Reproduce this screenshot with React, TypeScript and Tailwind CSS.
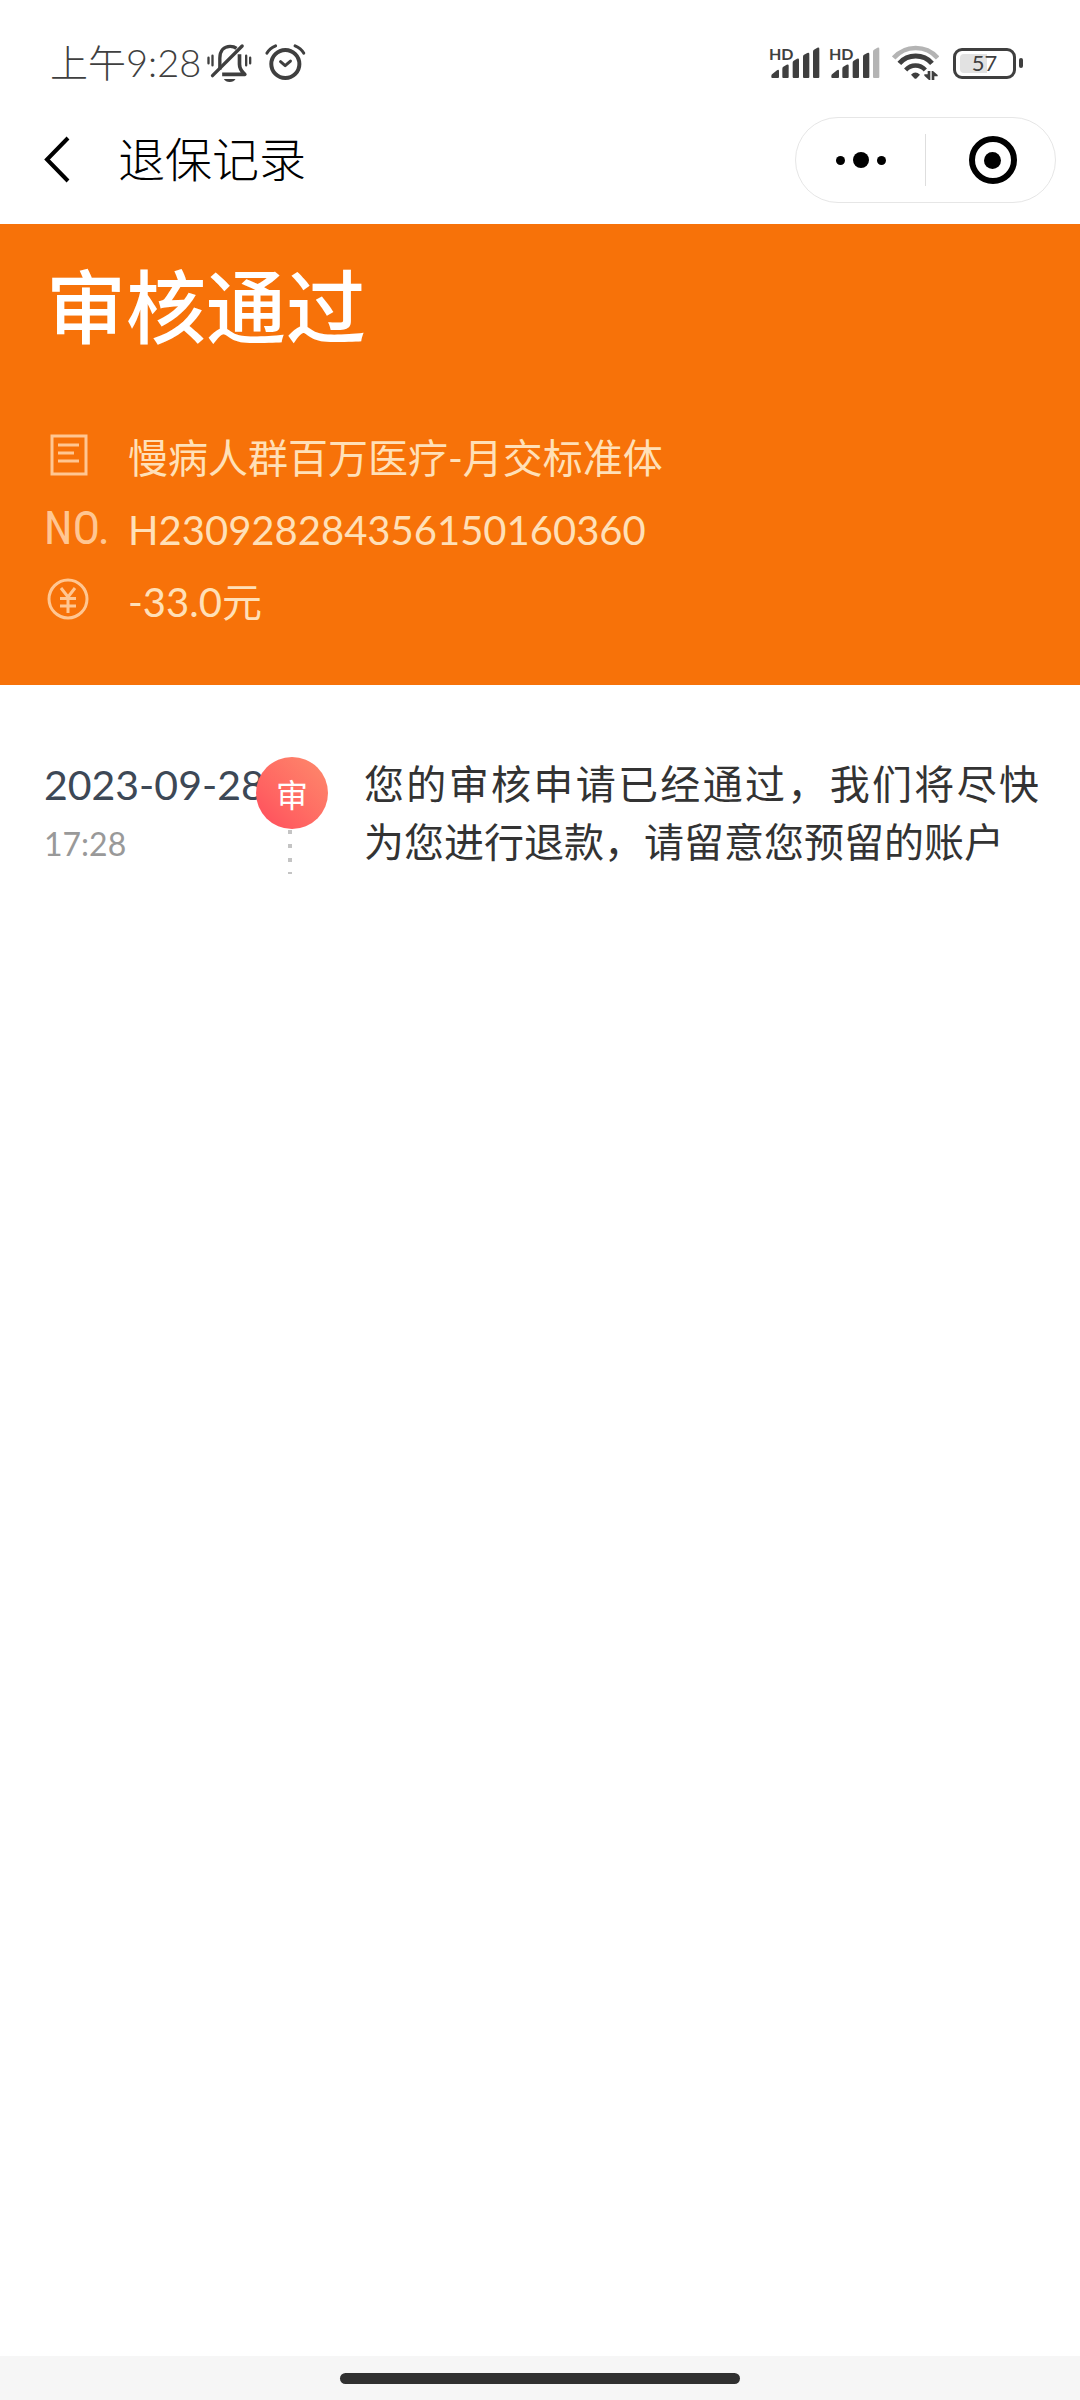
import React from "react";

function MutedBellIcon() {
  return (
    <svg viewBox="530 70 140 120" className="h-10 w-[47px]" fill="none" stroke="#3f3f3f" aria-hidden="true">
      <g strokeWidth="7" strokeLinecap="round">
        <path d="M537 114v17M549 108v29M650 108v29M662 114v17" />
      </g>
      <path d="M571 150V116C571 93 584 80 602 80c8 0 14 2 19 6" strokeWidth="10" />
      <path d="M630 104v30c0 12 4 20 16 30H578" strokeWidth="11" strokeLinejoin="round" />
      <path d="M549 168L638 79" strokeWidth="10" strokeLinecap="round" />
      <path d="M583 178h35c-3 6-9 9-17.500 9s-14-3-17.500-9z" fill="#3f3f3f" stroke="none" />
    </svg>
  );
}

function AlarmIcon() {
  return (
    <svg viewBox="708 70 124 120" className="h-10 w-[41px]" fill="none" stroke="#3f3f3f" aria-hidden="true">
      <circle cx="769.5" cy="133" r="42.500" strokeWidth="12" />
      <path d="M714 100C719 91 728 83 740 78M825 100C820 91 811 83 799 78" strokeWidth="9" strokeLinecap="round" />
      <path d="M755 126l14 12 16-14" strokeWidth="9" strokeLinecap="round" strokeLinejoin="round" />
    </svg>
  );
}

function Signal({ weak = false }: { weak?: boolean }) {
  return (
    <div className="relative h-9 w-[50px]">
      <svg viewBox="62 78 150 108" className="h-9 w-[50px]" fill="#3f3f3f" aria-hidden="true">
        <path d="M66 171q0-4 3-6l14-11q6-4 6 3v17q0 3-3 3H69q-3 0-3-3z" />
        <path d="M99 149q0-4 3-6l10-6q6-2 6 3v34q0 3-3 3h-13q-3 0-3-3z" />
        <path d="M130 131q0-4 3-6l10-6q6-2 6 3v52q0 3-3 3h-13q-3 0-3-3z" />
        <path d="M161 113q0-4 3-6l10-5q6-2 6 3v69q0 3-3 3h-13q-3 0-3-3z" />
        <path d="M191 98q0-4 3-6l10-6q6-2 6 3v85q0 3-3 3h-13q-3 0-3-3z" fill={weak ? "#b4b4b4" : "#3f3f3f"} />
      </svg>
      <span className="absolute -left-px -top-px text-[16px] font-bold leading-5">HD</span>
    </div>
  );
}

function WifiIcon() {
  return (
    <svg viewBox="427 78 141 108" className="h-9 w-[47px]" fill="none" stroke="#3f3f3f" aria-hidden="true">
      <path d="M432 117C467 77 529 77 564 117" stroke="#b4b4b4" strokeWidth="14" />
      <path d="M449 133C475 104 521 104 547 133" strokeWidth="15" />
      <path d="M468 153C484 135 511 135 527 153" strokeWidth="13" />
      <path d="M484 167q13-13 27 0l-10 11q-3.500 3-7 0z" fill="#3f3f3f" stroke="none" />
      <path d="M534 156h8v27h-4l-14-13v-4h10zM546 183v-27h4l14 12v4h-10v11z" fill="#3f3f3f" stroke="none" />
    </svg>
  );
}

function Battery() {
  return (
    <div className="flex items-center gap-[3px]">
      <div className="relative flex h-[31px] w-[63px] items-center justify-center rounded-[9px] border-[3px] border-[#3f3f3f]">
        <span className="absolute inset-y-[3px] left-1 w-[27px] rounded-l bg-[#e2e2e2]" />
        <span className="relative text-[22px] leading-6">57</span>
      </div>
      <span className="h-[10px] w-1 rounded-sm bg-[#3f3f3f]" />
    </div>
  );
}

function StatusBar() {
  return (
    <div className="flex h-[102px] items-center justify-between pl-[50px] pr-[57px] pt-6 text-[#3f3f3f]">
      <div className="flex items-center">
        <span className="pb-0.5 text-[38px] font-light leading-[54px]">上午9:28</span>
        <span className="ml-[5px] flex gap-3">
          <MutedBellIcon />
          <AlarmIcon />
        </span>
      </div>
      <div className="flex items-center">
        <Signal />
        <span className="ml-[10px]">
          <Signal weak />
        </span>
        <span className="ml-3">
          <WifiIcon />
        </span>
        <span className="ml-[14px]">
          <Battery />
        </span>
      </div>
    </div>
  );
}

function NavBar() {
  return (
    <header className="flex h-[122px] items-center pb-1.5 pl-9 pr-6">
      <button type="button" aria-label="返回" className="flex h-16 w-11 items-center justify-center">
        <svg viewBox="0 0 44 64" className="h-16 w-11" fill="none" stroke="#000" strokeWidth="4" aria-hidden="true">
          <path d="M32 10L11 31.500 32 53" />
        </svg>
      </button>
      <h1 className="ml-[38px] grow pb-0.5 text-[47px] font-light leading-[64px] text-black">退保记录</h1>
      <div className="flex h-[86px] w-[261px] items-center rounded-full border border-[#e6e6e6]">
        <button type="button" aria-label="更多" className="flex h-full flex-1 items-center justify-center gap-2">
          <span className="size-[9px] rounded-full bg-black" />
          <span className="size-4 rounded-full bg-black" />
          <span className="size-[9px] rounded-full bg-black" />
        </button>
        <span className="h-[52px] w-px bg-[#dedede]" />
        <button type="button" aria-label="关闭" className="flex h-full flex-1 items-center justify-center">
          <span className="ml-1 flex size-12 items-center justify-center rounded-full border-[6px] border-black">
            <span className="size-[17px] rounded-full bg-black" />
          </span>
        </button>
      </div>
    </header>
  );
}

function DocumentIcon() {
  return (
    <svg viewBox="0 0 48 48" className="size-12" fill="none" stroke="currentColor" strokeWidth="3" aria-hidden="true">
      <path d="M8 2h34v38H8zM14 11h21M14 19h16M14 27h21" />
    </svg>
  );
}

function YuanIcon() {
  return (
    <svg viewBox="0 0 48 48" className="size-12" fill="none" stroke="currentColor" strokeWidth="3" aria-hidden="true">
      <circle cx="24" cy="21" r="19" />
      <path d="M17 10l7 9 7-9M24 19v16M16 20.500h16M16 28h16" />
    </svg>
  );
}

function Summary() {
  return (
    <section className="bg-[#f77209] pb-[47px] pl-11 pr-10 pt-[22px]">
      <h2 className="pl-0.5 text-[80px] font-medium leading-[120px] text-white">审核通过</h2>
      <ul className="mt-14 text-[#ffe0b8]">
        <li className="flex h-[72px] items-center">
          <span className="w-[84px] shrink-0 text-[#ffc692]">
            <DocumentIcon />
          </span>
          <span className="text-[40px] leading-[58px]">慢病人群百万医疗-月交标准体</span>
        </li>
        <li className="flex h-[72px] items-center">
          <span className="w-[84px] shrink-0 pb-1 font-['Roboto_Condensed','Liberation_Sans_Narrow','Liberation_Sans',sans-serif] text-[46px] leading-[58px] text-[#ffc692]">
            NO.
          </span>
          <span className="text-[40px] leading-[58px]">H230928284356150160360</span>
        </li>
        <li className="flex h-[72px] items-center">
          <span className="w-[84px] shrink-0 text-[#ffc692]">
            <YuanIcon />
          </span>
          <span className="text-[40px] leading-[58px]">-33.0元</span>
        </li>
      </ul>
    </section>
  );
}

function Timeline() {
  return (
    <main className="grow pl-11 pr-[41px] pt-[70px]">
      <article className="flex items-start">
        <div className="w-[212px] shrink-0 whitespace-nowrap">
          <p className="text-[41px] leading-[60px] text-[#3d4856]">2023-09-28</p>
          <p className="text-[32px] leading-[58px] text-[#999]">17:28</p>
        </div>
        <div className="relative mt-0.5 flex w-[72px] shrink-0 flex-col items-center">
          <span className="flex size-[72px] items-center justify-center rounded-full bg-linear-to-tr from-[#ff4a5c] to-[#fd8a6c] pt-1 text-[32px] leading-10 text-white">
            审
          </span>
          <span className="mr-1 mt-px flex flex-col gap-[10px]">
            <i className="size-1 bg-[#c4c4c4]" />
            <i className="size-1 bg-[#c4c4c4]" />
            <i className="size-1 bg-[#c4c4c4]" />
            <i className="h-0.5 w-1 bg-[#c4c4c4]" />
          </span>
        </div>
        <p className="ml-9 grow basis-0 text-justify text-[40px] leading-[58px] text-[#333]">
          您的审核申请已经通过，我们将尽快为您进行退款，请留意您预留的账户
        </p>
      </article>
    </main>
  );
}

export default function App() {
  return (
    <div className="flex min-h-screen flex-col bg-white font-['Lato','Noto_Sans_CJK_SC',sans-serif]" lang="zh-CN">
      <StatusBar />
      <NavBar />
      <Summary />
      <Timeline />
      <footer className="flex h-11 items-center justify-center bg-[#f6f6f6]">
        <span className="h-[11px] w-[37%] rounded-full bg-[#303030]" />
      </footer>
    </div>
  );
}
